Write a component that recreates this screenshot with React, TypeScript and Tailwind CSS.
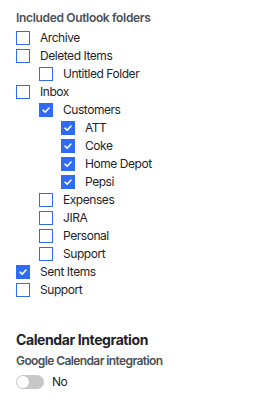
import React from "react";

type Item = { label: string; level: number; checked: boolean };

const items: Item[] = [
  { label: "Archive", level: 0, checked: false },
  { label: "Deleted Items", level: 0, checked: false },
  { label: "Untitled Folder", level: 1, checked: false },
  { label: "Inbox", level: 0, checked: false },
  { label: "Customers", level: 1, checked: true },
  { label: "ATT", level: 2, checked: true },
  { label: "Coke", level: 2, checked: true },
  { label: "Home Depot", level: 2, checked: true },
  { label: "Pepsi", level: 2, checked: true },
  { label: "Expenses", level: 1, checked: false },
  { label: "JIRA", level: 1, checked: false },
  { label: "Personal", level: 1, checked: false },
  { label: "Support", level: 1, checked: false },
  { label: "Sent Items", level: 0, checked: true },
  { label: "Support", level: 0, checked: false },
];

function Box({ checked }: { checked: boolean }) {
  return checked ? (
    <span className="w-[14px] h-[14px] bg-[#2f6bf5] flex items-center justify-center shrink-0">
      <svg width="10" height="10" viewBox="0 0 10 10" fill="none">
        <path d="M2 5.2 L4.2 7.2 L8 3" stroke="white" strokeWidth="1.6" strokeLinecap="round" strokeLinejoin="round" />
      </svg>
    </span>
  ) : (
    <span className="w-[14px] h-[14px] border border-[#2f6bf5] bg-white shrink-0" />
  );
}

export default function App() {
  return (
    <div className="w-[259px] h-[400px] bg-white px-4 pt-[10px] text-[#1f2328]" style={{ fontFamily: "Inter, 'Noto Sans', sans-serif" }}>
      <div className="text-[12px] leading-4 font-semibold tracking-[-0.33px] text-[#4b5058] mb-[3px]">Included Outlook folders</div>
      <div className="flex flex-col">
        {items.map((it, i) => (
          <div key={i} className={"flex items-center h-[18px] gap-[10px] " + (it.level === 0 ? "" : it.level === 1 ? "pl-[23px]" : "pl-[45px]")}>
            <Box checked={it.checked} />
            <span className="text-[12px] leading-4 tracking-[-0.45px]">{it.label}</span>
          </div>
        ))}
      </div>
      <div className="mt-[31px] text-[14px] leading-5 font-bold tracking-[-0.4px] text-[#1f2328]">Calendar Integration</div>
      <div className="mt-[3px] text-[12px] leading-4 font-semibold tracking-[-0.6px] text-[#4b5058]">Google Calendar integration</div>
      <div className="mt-[5px] flex items-center gap-[8px] h-[16px]">
        <span className="w-[28px] h-[14px] rounded-full bg-[#c8c8c8] flex items-center px-[1px]">
          <span className="w-[12px] h-[12px] rounded-full bg-white" />
        </span>
        <span className="text-[12px] leading-4 tracking-[-0.45px]">No</span>
      </div>
    </div>
  );
}
